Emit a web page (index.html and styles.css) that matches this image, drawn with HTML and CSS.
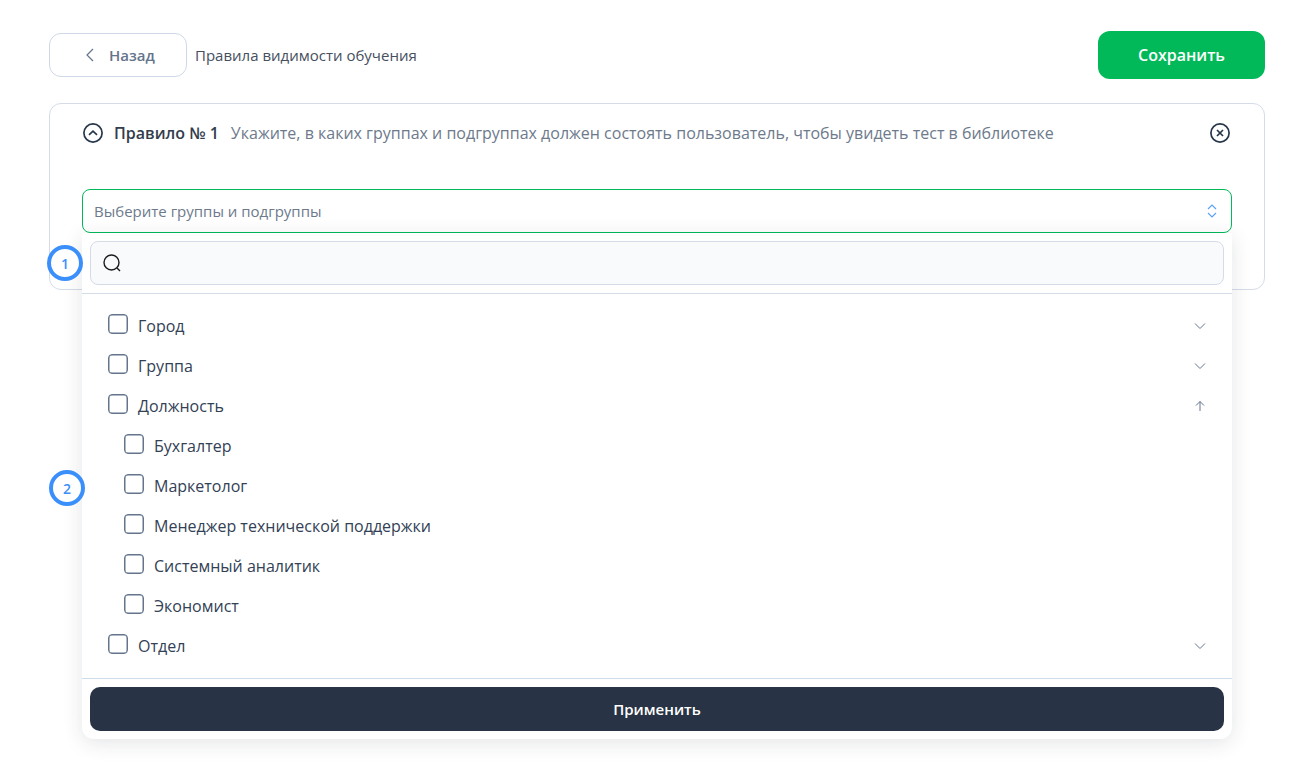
FILE: index.html
```html
<!DOCTYPE html>
<html lang="ru">
<head>
  <meta charset="UTF-8">
  <meta name="viewport" content="width=device-width, initial-scale=1.0">
  <title>Правила видимости обучения</title>
  <link rel="stylesheet" href="styles.css">
</head>
<body>
  <div class="page">
    <!-- шапка -->
    <header class="top-bar">
      <button class="back-btn">
        <svg class="back-icon" width="10" height="16" viewBox="0 0 10 16" fill="none"><path d="M8 2 2 8l6 6" stroke="#64748b" stroke-width="1.2"/></svg>
        <span>Назад</span>
      </button>
      <span class="page-title">Правила видимости обучения</span>
      <button class="save-btn">Сохранить</button>
    </header>

    <!-- правило -->
    <section class="rule-card">
      <div class="rule-head">
        <svg class="rule-toggle" width="20" height="20" viewBox="0 0 20 20" fill="none"><circle cx="10" cy="10" r="9.1" stroke="#27364a" stroke-width="1.7"/><path d="m6 11.8 4-3.6 4 3.6" stroke="#27364a" stroke-width="1.7"/></svg>
        <span class="rule-name">Правило № 1</span>
        <span class="rule-hint">Укажите, в каких группах и подгруппах должен состоять пользователь, чтобы увидеть тест в библиотеке</span>
        <svg class="rule-close" width="20" height="20" viewBox="0 0 20 20" fill="none"><circle cx="10" cy="10" r="9.1" stroke="#27364a" stroke-width="1.7"/><path d="m7 7 6 6m0-6-6 6" stroke="#27364a" stroke-width="1.7"/></svg>
      </div>

      <div class="select-wrap">
        <div class="select-box">
          <span>Выберите группы и подгруппы</span>
          <svg width="10" height="16" viewBox="0 0 10 16" fill="none"><path d="M1 6l4-4 4 4M1 10l4 4 4-4" stroke="#5ba2f8" stroke-width="1.2"/></svg>
        </div>

        <!-- выпадающий список -->
        <div class="dropdown">
          <div class="search-row">
            <div class="search-box">
              <svg width="20" height="20" viewBox="0 0 20 20" fill="none"><circle cx="9.5" cy="9.5" r="7.5" stroke="#1c1c1c" stroke-width="1.4"/><path d="m15 15 3 3" stroke="#1c1c1c" stroke-width="1.4"/></svg>
            </div>
          </div>
          <ul class="tree">
            <li class="tree-row"><span class="check"></span><span class="tree-label">Город</span>
              <svg class="tree-arrow" width="12" height="8" viewBox="0 0 12 8" fill="none"><path d="m1 1.5 5 5 5-5" stroke="#64748b"/></svg></li>
            <li class="tree-row"><span class="check"></span><span class="tree-label">Группа</span>
              <svg class="tree-arrow" width="12" height="8" viewBox="0 0 12 8" fill="none"><path d="m1 1.5 5 5 5-5" stroke="#64748b"/></svg></li>
            <li class="tree-row"><span class="check"></span><span class="tree-label">Должность</span>
              <svg class="tree-arrow" width="12" height="12" viewBox="0 0 12 12" fill="none"><path d="M6 11V1.5M2 5.5l4-4 4 4" stroke="#64748b"/></svg></li>
            <li class="tree-row sub"><span class="check"></span><span class="tree-label">Бухгалтер</span></li>
            <li class="tree-row sub"><span class="check"></span><span class="tree-label">Маркетолог</span></li>
            <li class="tree-row sub"><span class="check"></span><span class="tree-label">Менеджер технической поддержки</span></li>
            <li class="tree-row sub"><span class="check"></span><span class="tree-label">Системный аналитик</span></li>
            <li class="tree-row sub"><span class="check"></span><span class="tree-label">Экономист</span></li>
            <li class="tree-row"><span class="check"></span><span class="tree-label">Отдел</span>
              <svg class="tree-arrow" width="12" height="8" viewBox="0 0 12 8" fill="none"><path d="m1 1.5 5 5 5-5" stroke="#64748b"/></svg></li>
          </ul>
          <div class="apply-row">
            <button class="apply-btn">Применить</button>
          </div>
        </div>
      </div>
    </section>
  </div>

  <!-- метки-подсказки поверх скриншота -->
  <span class="marker marker-1">1</span>
  <span class="marker marker-2">2</span>
</body>
</html>
```

FILE: styles.css
```css
/* базовое */
html, body {
  margin: 0;
  padding: 0;
  height: 100%;
  background: #fff;
  overflow: hidden;
}
body {
  position: relative;
  font-family: "Open Sans", "Noto Sans", sans-serif;
  color: #334155;
}
button {
  font-family: inherit;
  cursor: pointer;
}
.page {
  padding: 31px 31px 0 49px;
}

/* шапка */
.top-bar {
  display: flex;
  align-items: center;
  height: 48px;
}
.back-btn {
  display: flex;
  align-items: center;
  width: 138px;
  height: 44px;
  padding: 0 0 0 35px;
  box-sizing: border-box;
  background: #fff;
  border: 1px solid #cfd8e6;
  border-radius: 12px;
  color: #64748b;
  font-size: 15px;
  font-weight: 600;
}
.back-icon {
  margin-right: 14px;
}
.page-title {
  margin-left: 8px;
  font-size: 15px;
  color: #454f5e;
}
.save-btn {
  margin-left: auto;
  width: 167px;
  height: 48px;
  background: #02b959;
  border: 0;
  border-radius: 12px;
  color: #fff;
  font-size: 16px;
  font-weight: 600;
}

/* карточка правила */
.rule-card {
  margin-top: 24px;
  height: 187px;
  box-sizing: border-box;
  padding: 19px 32px 0;
  border: 1px solid #d5dce8;
  border-radius: 12px;
}
.rule-head {
  display: flex;
  align-items: center;
  height: 20px;
  padding: 0 1px;
}
.rule-name {
  margin-left: 11px;
  font-size: 16px;
  font-weight: 600;
  color: #333d4c;
}
.rule-hint {
  margin-left: 12px;
  font-size: 16px;
  color: #6d7a8c;
}
.rule-close {
  margin-left: auto;
  margin-right: 1px;
}

/* селект */
.select-wrap {
  position: relative;
  margin-top: 46px;
}
.select-box {
  display: flex;
  align-items: center;
  justify-content: space-between;
  height: 44px;
  box-sizing: border-box;
  padding: 0 14px 0 11px;
  border: 1px solid #02b959;
  border-radius: 8px;
  background: #fff;
  font-size: 15px;
  color: #6d7a8c;
}
.dropdown {
  position: absolute;
  left: 0;
  right: 0;
  top: 44px;
  height: 506px;
  background: #fff;
  border-radius: 0 0 12px 12px;
  box-shadow: 0 4px 20px rgba(30, 41, 59, 0.12);
  z-index: 2;
}
.search-row {
  padding: 8px;
  border-bottom: 1px solid #d5dce8;
}
.search-box {
  display: flex;
  align-items: center;
  height: 44px;
  box-sizing: border-box;
  padding-left: 11px;
  background: #f9fafb;
  border: 1px solid #d5dce8;
  border-radius: 8px;
}

/* дерево групп */
.tree {
  list-style: none;
  margin: 0;
  padding: 12px 0;
  height: 385px;
  box-sizing: border-box;
  border-bottom: 1px solid #cfdcea;
}
.tree-row {
  display: flex;
  align-items: center;
  height: 40px;
  padding: 0 26px 0 26px;
  font-size: 16px;
}
.tree-row.sub {
  padding-left: 42px;
}
.check {
  flex: none;
  width: 20px;
  height: 20px;
  box-sizing: border-box;
  margin-top: -5px;
  border: 1px solid #64748b;
  border-radius: 4px;
  box-shadow: inset 0 0 0 0.5px #64748b;
  background: #fff;
}
.tree-label {
  margin-left: 10px;
}
.tree-arrow {
  margin-left: auto;
}
.apply-row {
  padding: 8px;
}
.apply-btn {
  display: block;
  width: 100%;
  height: 44px;
  background: #283445;
  border: 0;
  border-radius: 10px;
  color: #fff;
  font-size: 15px;
  font-weight: 600;
}

/* метки */
.marker {
  position: absolute;
  display: flex;
  align-items: center;
  justify-content: center;
  width: 36px;
  height: 36px;
  box-sizing: border-box;
  border: 4px solid #3b8ffb;
  border-radius: 50%;
  background: #fff;
  color: #3b8ffb;
  font-size: 14px;
  font-weight: 600;
  z-index: 3;
}
.marker-1 {
  left: 47px;
  top: 245px;
}
.marker-2 {
  left: 49px;
  top: 470px;
}
```
